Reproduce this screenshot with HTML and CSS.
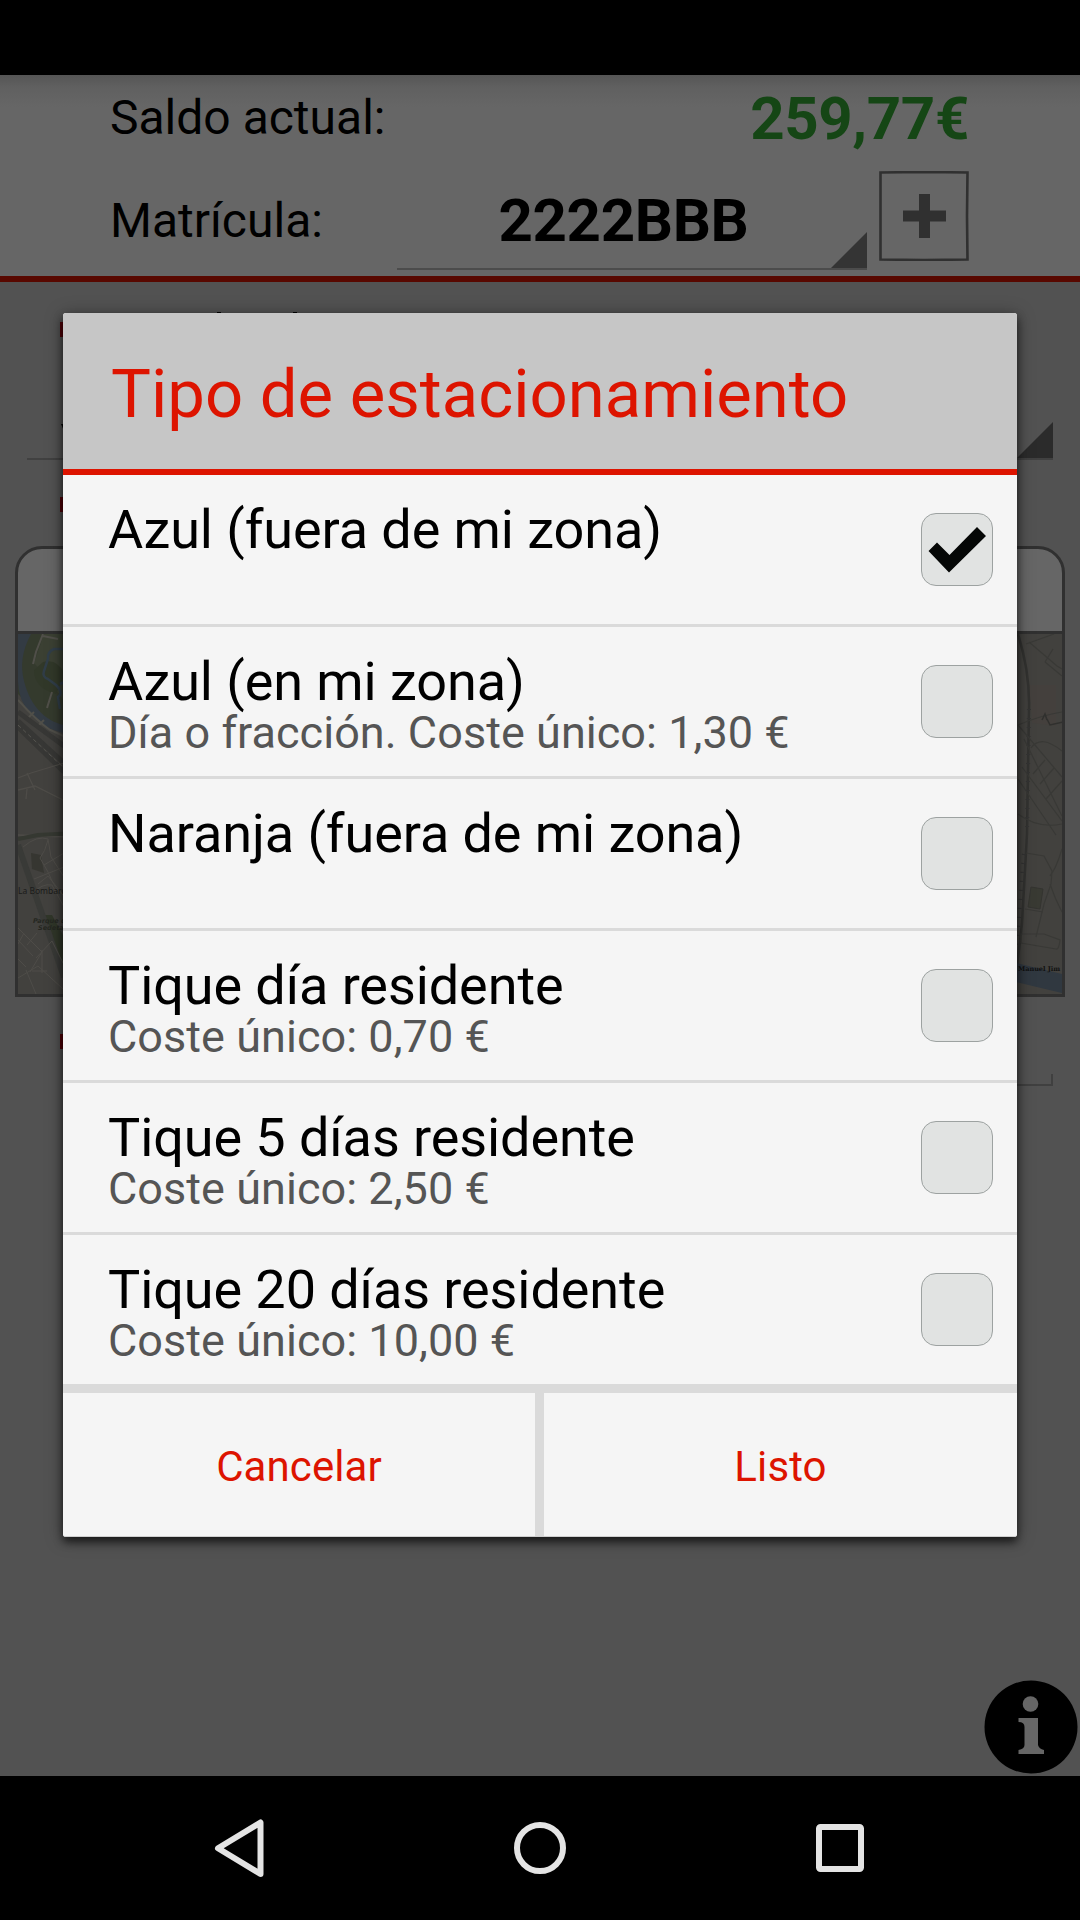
FILE: index.html
```html
<!DOCTYPE html>
<html lang="es">
<head>
<meta charset="utf-8">
<title>Tipo de estacionamiento</title>
<link rel="stylesheet" href="styles.css">
</head>
<body>
<div class="screen">
  <div class="status-bar"></div>
  <header class="account">
    <div class="account-row balance-row">
      <span class="label">Saldo actual:</span>
      <strong class="balance">259,77€</strong>
    </div>
    <div class="account-row plate-row">
      <span class="label">Matrícula:</span>
      <div class="plate"><strong>2222BBB</strong><i class="spinner-corner"></i></div>
      <svg class="add" viewBox="0 0 90 90">
        <path d="M1.500 1.500 45 1 88.500 1.500 88 45 88.500 88.500 45 89 1.500 88.500z" fill="none" stroke="#303030" stroke-width="2.600"/>
        <path d="M40 23h11v16.500h16v11H51V67H40V50.500H24v-11h16z" fill="#303030"/>
      </svg>
    </div>
  </header>
  <main class="form">
    <svg class="field-heading" viewBox="0 0 300 40"><path d="M157 10h4v4h-4zM233 10h4v4h-4z" fill="#000"/><path d="M0 20h15v15H0z" fill="#500008"/></svg>
    <div class="field zone"><svg class="value-mark" viewBox="0 0 10 10"><path d="M1 1h3l3 7H4z"/></svg><i class="spinner-corner"></i></div>
    <i class="bullet"></i>
    <section class="map-card">
      <div class="map-title"></div>
      <svg class="map" viewBox="0 0 1044 360">
        <rect width="1044" height="360" fill="#42413e"/>
        <path d="M0 0h60v98L34 88 14 74 0 60z" fill="#343a2d"/>
        <path d="M26 0h34v50l-12 20-18-26-14-15z" fill="#3b4033"/>
        <path d="M25 28q14-4 22 12l-9 20q-22-6-22-24z" fill="#313829"/>
        <path d="M0 0h13Q0 24 6 47q6 24 22 36 10 8 32 11v7Q30 99 14 82 0 66 0 48z" fill="#333b43"/>
        <path d="M60 15H36q-7 3-6 10l-4 12q-2 6 4 8l8 6q8 8 2 12l2 12M42 50l9-4" fill="none" stroke="#303d48" stroke-width="2.500"/>
        <path d="M25 0 18 18l-3 12M25 2l15 3M34 58l-5 16M0 66q18 20 32 30l20 9M10 84l6-6M20 92l6-6" fill="none" stroke="#504f49" stroke-width="2"/>
        <path d="M0 78q20 15 46 34M0 87l46 42M0 93l46 45" fill="none" stroke="#373735" stroke-width="5"/>
        <path d="m0 91 46 43" fill="none" stroke="#55544f" stroke-width="1" stroke-dasharray="4 3"/>
        <path d="m0 144 13-5 33-10M9 139l8 17M0 156l17-4 40 20M9 155l-1 10M0 201l48 2" fill="none" stroke="#4e4c48" stroke-width="1.300"/>
        <path d="M0 205 20 201 60 199" fill="none" stroke="#353831" stroke-width="4"/>
        <path d="M26 281h8l12 22v34z" fill="#303629"/>
        <path d="M0 211 46 343" fill="none" stroke="#393a37" stroke-width="6"/>
        <path d="m13 219 10 2 3 18-12-4z" fill="#363631"/>
        <path d="M5 213q14-12 25-8l3 18 13 20M30 206q-3 12-8 18l8 14q8 20 16 23M46 219l-20 12M16 245l30-12M20 250l10-8 16 20M14 260q10-11 20-9l12 22M0 294l24 24-12 20M0 306l15 16M6 299l-6 11M19 299l-10 12M18 324l16-17 12 24M14 337h15M24 316v23M0 344l20-12 25 23M8 336l10 24M0 325l8 8" fill="none" stroke="#4e4c48" stroke-width="1"/>
        <text class="place" x="0" y="260">La Bombarda</text>
        <text class="park" x="15" y="289">Parque de</text>
        <text class="park" x="20" y="296">Sedetania</text>
        <path d="M1011 51h27v41l-24-3z" fill="#44403d"/>
        <path d="M1000 0q12 38 11 75l-2 125-5 90-5 42" fill="none" stroke="#323230" stroke-width="2.500"/>
        <path d="M1011 75 1009 200M1006 220l-8 100" fill="none" stroke="#333" stroke-width="4" stroke-dasharray="1 8"/>
        <path d="M1011 8l28 24 5 3M1008 10l28-10M1027 28l17 14M1027 28l8-13M1000 91q24-10 44-13M1000 91l44 52M1006 105l38 77M1013 114q10-14 31 3M1004 133l40 54M1000 145l38 56M1015 140l12-14M1022 150l14-16M1028 165l16-18M1000 180q20 15 44 10M1008 219l18 3 8 15-1 13-7 20-8 33M1044 215q-6 20-12 27M1032 250q5 15 12 28M1007 275l18 3M1003 300h23l16 6q-1 10-4 9l-35-6z" fill="none" stroke="#393936" stroke-width="1.200"/>
        <path d="m1029 85 3 6 13-3M1024 86l3-6 2 6" fill="none" stroke="#30302e" stroke-width="1.500"/>
        <path d="m1013 253 12 2-3 20-12-2z" fill="#393a33" stroke="#343430"/>
        <path d="m990 327 54 13v19l-54-13z" fill="#303840"/>
        <text class="street" x="1000" y="337">Manuel Jim</text>
      </svg>
    </section>
    <i class="bullet bullet-last"></i>
    <div class="text-input"></div>
    <svg class="info" viewBox="0 0 94 94">
      <circle cx="47" cy="47" r="46.500"/>
      <g fill="#666"><circle cx="46.500" cy="24" r="7.800"/><path d="M34.500 38H54v27q1 4 6 5v4H34.500v-4q6-1 6-5V47q0-5-6-5z"/></g>
    </svg>
  </main>
  <nav class="nav-bar">
    <svg viewBox="0 0 60 60"><path d="M50.500 4.500v51.500L8 30.200z" fill="none" stroke="#e4e4e4" stroke-width="6" stroke-linejoin="round"/></svg>
    <svg viewBox="0 0 60 60"><circle cx="30" cy="30" r="23" fill="none" stroke="#e4e4e4" stroke-width="6"/></svg>
    <svg viewBox="0 0 60 60"><rect x="9" y="9" width="42" height="42" rx="1.500" fill="none" stroke="#e4e4e4" stroke-width="6"/></svg>
  </nav>

  <div class="dialog" role="dialog">
    <h1 class="dialog-title">Tipo de estacionamiento</h1>
    <ul class="options">
      <li class="option"><div class="option-text"><span class="name">Azul (fuera de mi zona)</span></div><span class="check"><svg viewBox="0 0 72 73"><path d="m7.500 38 8.500-8.500L28.500 42 56 14l9 9-37 36.500z" fill="#050706"/></svg></span></li>
      <li class="option"><div class="option-text"><span class="name">Azul (en mi zona)</span><span class="cost">Día o fracción. Coste único: 1,30 €</span></div><span class="check"></span></li>
      <li class="option"><div class="option-text"><span class="name">Naranja (fuera de mi zona)</span></div><span class="check"></span></li>
      <li class="option"><div class="option-text"><span class="name">Tique día residente</span><span class="cost">Coste único: 0,70 €</span></div><span class="check"></span></li>
      <li class="option"><div class="option-text"><span class="name">Tique 5 días residente</span><span class="cost">Coste único: 2,50 €</span></div><span class="check"></span></li>
      <li class="option"><div class="option-text"><span class="name">Tique 20 días residente</span><span class="cost">Coste único: 10,00 €</span></div><span class="check"></span></li>
    </ul>
    <div class="actions"><button class="action">Cancelar</button><button class="action">Listo</button></div>
  </div>
</div>
</body>
</html>
```
FILE: styles.css
```css
* { box-sizing: border-box; }
body { margin: 0; background: #000; font-family: Roboto, sans-serif; }
svg { display: block; }
.screen { position: relative; display: flex; flex-direction: column; width: 1080px; height: 1920px; overflow: hidden; background: #525252; }
.status-bar { height: 75px; background: #000; }

.account { height: 207px; padding: 0 111px 0 110px; border-bottom: 6px solid #580800; background: linear-gradient(#555 0, #606060 12px, #666 32px); color: #000; }
.account-row { display: flex; }
.label { font-size: 48px; line-height: 56px; }
.balance-row { height: 96px; justify-content: space-between; }
.balance-row .label { padding-top: 15px; }
.balance { padding-top: 9px; font-size: 60px; line-height: 70px; letter-spacing: -.35px; color: #154615; }
.plate-row { height: 99px; }
.plate-row .label { width: 287px; padding-top: 22px; }
.plate { position: relative; width: 470px; height: 99px; border-bottom: 2px solid #4c4c4c; text-align: center; font-size: 60px; line-height: 70px; letter-spacing: -.35px; padding: 15px 17px 0 0; }
.spinner-corner { position: absolute; right: 0; bottom: 0; width: 36px; height: 36px; background: #343434; clip-path: polygon(100% 0, 100% 100%, 0 100%); }
.add { width: 90px; height: 90px; margin-left: 12px; }

.form { display: flex; flex-direction: column; height: 1494px; padding-top: 20px; }
.field-heading { width: 300px; height: 40px; margin-left: 60px; }
.field { position: relative; width: 1026px; height: 118px; margin-left: 27px; border-bottom: 2px solid #414141; }
.field .spinner-corner { background: #2b2b2b; }
.value-mark { width: 10px; height: 10px; margin: 81px 0 0 33px; }
.bullet { width: 15px; height: 15px; margin: 37px 0 0 60px; background: #500008; }
.map-card { display: flex; flex-direction: column; width: 1050px; height: 451px; margin: 34px 0 0 15px; border: 3px solid #303030; border-radius: 27px 27px 0 0; background: #666; }
.map-title { height: 85px; border-bottom: 3px solid #303030; }
.map { width: 1044px; height: 360px; }
.place { font: 8.5px "Noto Sans", sans-serif; fill: #1b1b1a; }
.park { font: italic bold 6.5px "DejaVu Sans", sans-serif; fill: #252721; }
.street { font: bold 6.5px "DejaVu Serif", serif; fill: #111; }
.bullet-last { margin-top: 37px; }
.text-input { width: 980px; height: 12px; margin: 25px 0 0 73px; border: 2px solid #404040; border-width: 0 2px 2px 0; }
.info { width: 94px; height: 94px; margin: auto 2px 2px auto; }

.nav-bar { display: flex; justify-content: center; gap: 240px; height: 144px; padding-top: 42px; background: #000; }
.nav-bar svg { width: 60px; height: 60px; }

.dialog { position: absolute; left: 63px; top: 313px; width: 954px; height: 1224px; border-radius: 3px; background: #f5f5f5; box-shadow: 0 5px 9px rgba(0, 0, 0, .6), 0 2px 18px rgba(0, 0, 0, .35); }
.dialog-title { height: 162px; margin: 0; padding: 42px 0 0 48px; border-bottom: 6px solid #dd1400; border-radius: 3px 3px 0 0; background: #c6c6c6; color: #dd1400; font-size: 67px; font-weight: 400; line-height: 78px; white-space: nowrap; }
.options { margin: 0; padding: 0; list-style: none; }
.option { display: flex; justify-content: space-between; height: 152px; padding: 23px 24px 0 45px; border-bottom: 3px solid #dadada; }
.option:last-child { height: 158px; border-bottom-width: 9px; }
.option-text { display: flex; flex-direction: column; padding-top: 5px; }
.name { color: #000; font-size: 54px; line-height: 54px; letter-spacing: -.08px; white-space: nowrap; }
.cost { color: #555; font-size: 45px; line-height: 48px; letter-spacing: .04px; white-space: nowrap; }
.check { width: 72px; height: 73px; margin-top: 15px; border: 1px solid #9da2a1; border-radius: 15px; background: #e1e3e2; }
.check svg { width: 72px; height: 73px; margin: -1px; }
.actions { display: grid; grid-template-columns: 472px 473px; column-gap: 9px; height: 144px; border-bottom: 1px solid #cfcfcf; border-radius: 0 0 3px 3px; overflow: hidden; background: #dadada; }
.action { padding: 4px 0 0; border: 0; background: #f5f5f5; color: #dd1400; font: 42px Roboto, sans-serif; letter-spacing: .1px; }
```
